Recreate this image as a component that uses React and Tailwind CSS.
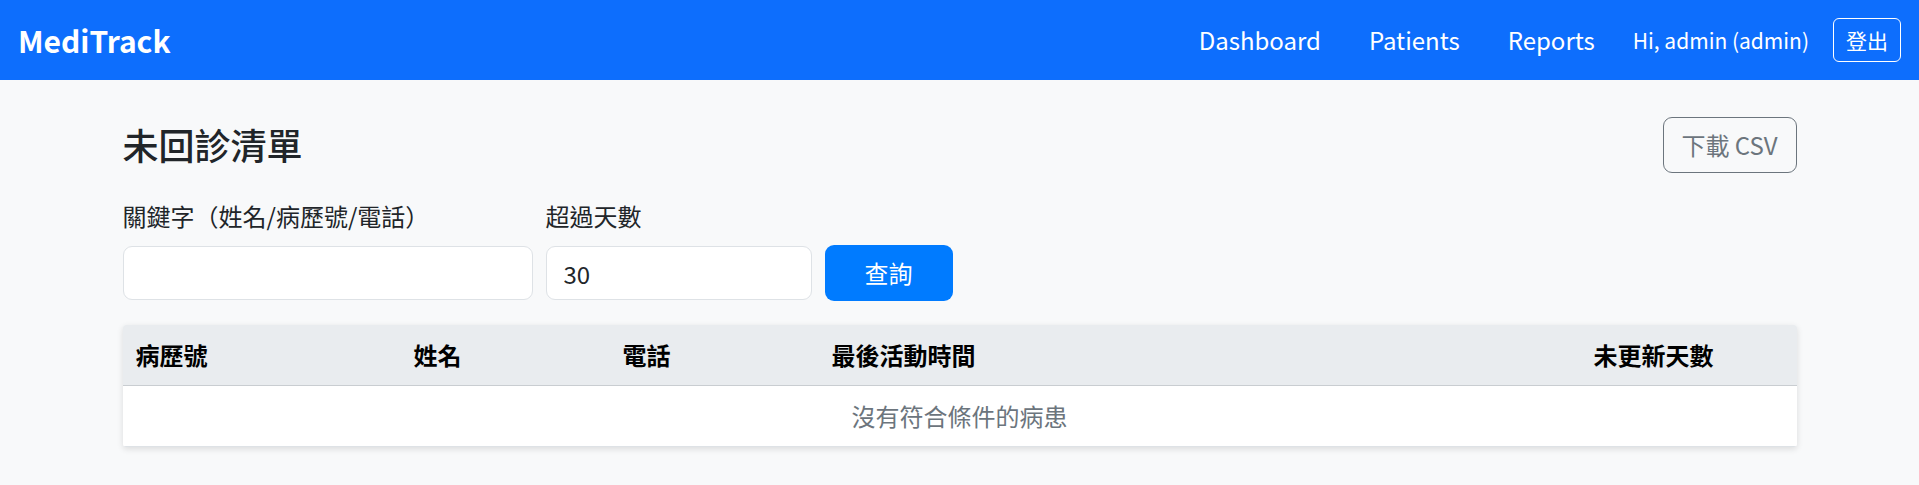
import { useState } from "react";

const font = { fontFamily: '"Noto Sans CJK TC", "Noto Sans", sans-serif' };

const Navbar = () => (
  <nav className="h-[80px] bg-[#0d6efd] flex items-center justify-between px-[18px]">
    <a className="text-[30px] font-bold text-white leading-none" href="#">MediTrack</a>
    <div className="flex items-center text-white">
      <a className="px-[24px] text-[24px] leading-[36px]" href="#">Dashboard</a>
      <a className="px-[24px] text-[24px] leading-[36px]" href="#">Patients</a>
      <a className="px-[24px] text-[24px] leading-[36px]" href="#">Reports</a>
      <span className="ml-[14px] text-[21px] leading-[36px]">Hi, admin (admin)</span>
      <button className="ml-[24px] h-[44px] w-[68px] border border-white rounded-[6px] text-[21px] leading-none">登出</button>
    </div>
  </nav>
);

const OverdueList = () => {
  const [keyword, setKeyword] = useState("");
  const [days, setDays] = useState("30");

  return (
    <main className="w-[1710px] mx-auto px-[18px]">
      {/* header row */}
      <div className="mt-[37px] flex items-center justify-between">
        <h4 className="text-[36px] font-medium leading-[1.2] text-[#212529]">未回診清單</h4>
        <button className="h-[56px] w-[134px] border border-[#6c757d] rounded-[9px] text-[24px] text-[#6c757d]">下載 CSV</button>
      </div>

      {/* filters */}
      <div className="mt-[25px] flex items-end gap-[13px] text-[#212529]">
        <div className="w-[410px]">
          <label className="block text-[24px] leading-[36px] mb-[12px]">關鍵字（姓名/病歷號/電話）</label>
          <input
            value={keyword}
            onChange={(e) => setKeyword(e.target.value)}
            className="w-full h-[54px] bg-white border border-[#dee2e6] rounded-[9px] px-[17px] text-[24px] outline-none"
          />
        </div>
        <div className="w-[266px]">
          <label className="block text-[24px] leading-[36px] mb-[12px]">超過天數</label>
          <input
            value={days}
            onChange={(e) => setDays(e.target.value)}
            className="w-full h-[54px] bg-white border border-[#dee2e6] rounded-[9px] px-[17px] text-[24px] outline-none"
          />
        </div>
        <button className="w-[128px] h-[56px] mb-[-1px] bg-[#007bff] text-white rounded-[9px] text-[24px]">查詢</button>
      </div>

      {/* table */}
      <div className="mt-[25px] bg-white shadow-[0_2px_6px_rgba(0,0,0,0.12)] rounded-[3px] overflow-hidden">
        <table className="w-full table-fixed border-collapse text-[24px]">
          <colgroup>
            <col className="w-[278px]" />
            <col className="w-[209px]" />
            <col className="w-[209px]" />
            <col className="w-[762px]" />
            <col />
          </colgroup>
          <thead className="bg-[#e9ecef]">
            <tr className="border-b border-[#c9cdd1]">
              <th className="px-[13px] py-[12px] leading-[36px] text-left font-bold text-black">病歷號</th>
              <th className="px-[13px] py-[12px] leading-[36px] text-left font-bold text-black">姓名</th>
              <th className="px-[13px] py-[12px] leading-[36px] text-left font-bold text-black">電話</th>
              <th className="px-[13px] py-[12px] leading-[36px] text-left font-bold text-black">最後活動時間</th>
              <th className="px-[13px] py-[12px] leading-[36px] text-left font-bold text-black">未更新天數</th>
            </tr>
          </thead>
          <tbody>
            <tr className="border-b border-[#dee2e6]">
              <td colSpan={5} className="px-[13px] py-[12px] leading-[36px] text-center text-[#6c757d]">沒有符合條件的病患</td>
            </tr>
          </tbody>
        </table>
      </div>
    </main>
  );
}

export default function App() {
  return (
    <div className="min-h-screen bg-[#f8f9fa]" style={font}>
      <Navbar />
      <OverdueList />
    </div>
  );
}
